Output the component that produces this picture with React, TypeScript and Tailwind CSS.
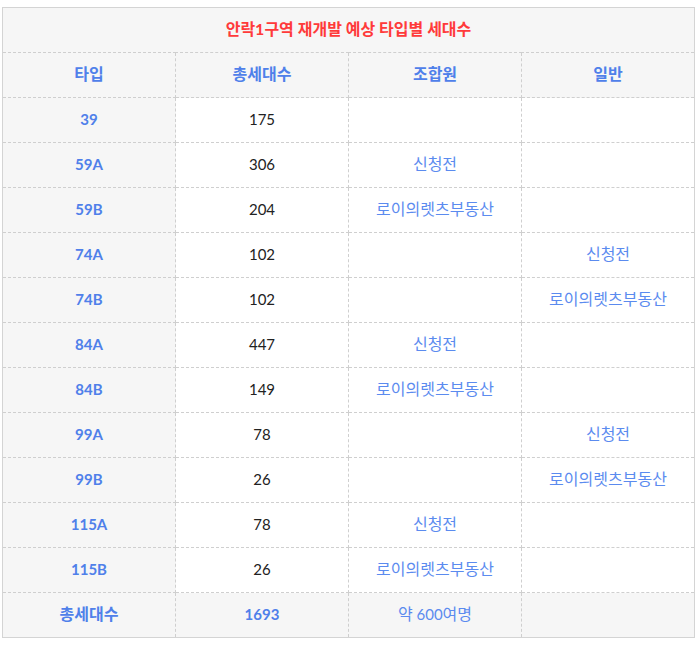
const rows: [string, string, string, string][] = [
  ["39", "175", "", ""],
  ["59A", "306", "신청전", ""],
  ["59B", "204", "로이의렛츠부동산", ""],
  ["74A", "102", "", "신청전"],
  ["74B", "102", "", "로이의렛츠부동산"],
  ["84A", "447", "신청전", ""],
  ["84B", "149", "로이의렛츠부동산", ""],
  ["99A", "78", "", "신청전"],
  ["99B", "26", "", "로이의렛츠부동산"],
  ["115A", "78", "신청전", ""],
  ["115B", "26", "로이의렛츠부동산", ""],
];

const cell = "h-[45px] pb-[2px] border border-dashed border-[#cfcfcf] text-center align-middle";

export default function App() {
  return (
    <div
      className="bg-white pt-[7px] pl-[2px]"
      style={{ fontFamily: 'Lato, "Noto Sans CJK KR", sans-serif' }}
    >
      <table className="w-[693px] table-fixed border-collapse border border-solid border-[#d4d4d4] text-[15px]">
        <tbody>
          <tr className="bg-[#f6f6f6]">
            <td colSpan={4} className={`${cell} text-[16px] font-bold text-[#ff3a3a]`}>
              안락1구역 재개발 예상 타입별 세대수
            </td>
          </tr>
          <tr className="bg-[#f6f6f6] text-[16px] font-bold text-[#4f80ea]">
            <td className={cell}>타입</td>
            <td className={cell}>총세대수</td>
            <td className={cell}>조합원</td>
            <td className={cell}>일반</td>
          </tr>
          {rows.map(([type, total, member, general]) => (
            <tr key={type}>
              <td className={`${cell} bg-[#f6f6f6] font-bold text-[#4f80ea]`}>{type}</td>
              <td className={`${cell} text-[#222]`}>{total}</td>
              <td className={`${cell} text-[16px] text-[#5b8bef]`}>{member}</td>
              <td className={`${cell} text-[16px] text-[#5b8bef]`}>{general}</td>
            </tr>
          ))}
          <tr className="bg-[#f6f6f6]">
            <td className={`${cell} text-[16px] font-bold text-[#4f80ea]`}>총세대수</td>
            <td className={`${cell} font-bold text-[#4f80ea]`}>1693</td>
            <td className={`${cell} text-[#5b8bef]`}>
              <span className="text-[16px]">약</span> 600<span className="text-[16px]">여명</span>
            </td>
            <td className={cell}></td>
          </tr>
        </tbody>
      </table>
    </div>
  );
}
